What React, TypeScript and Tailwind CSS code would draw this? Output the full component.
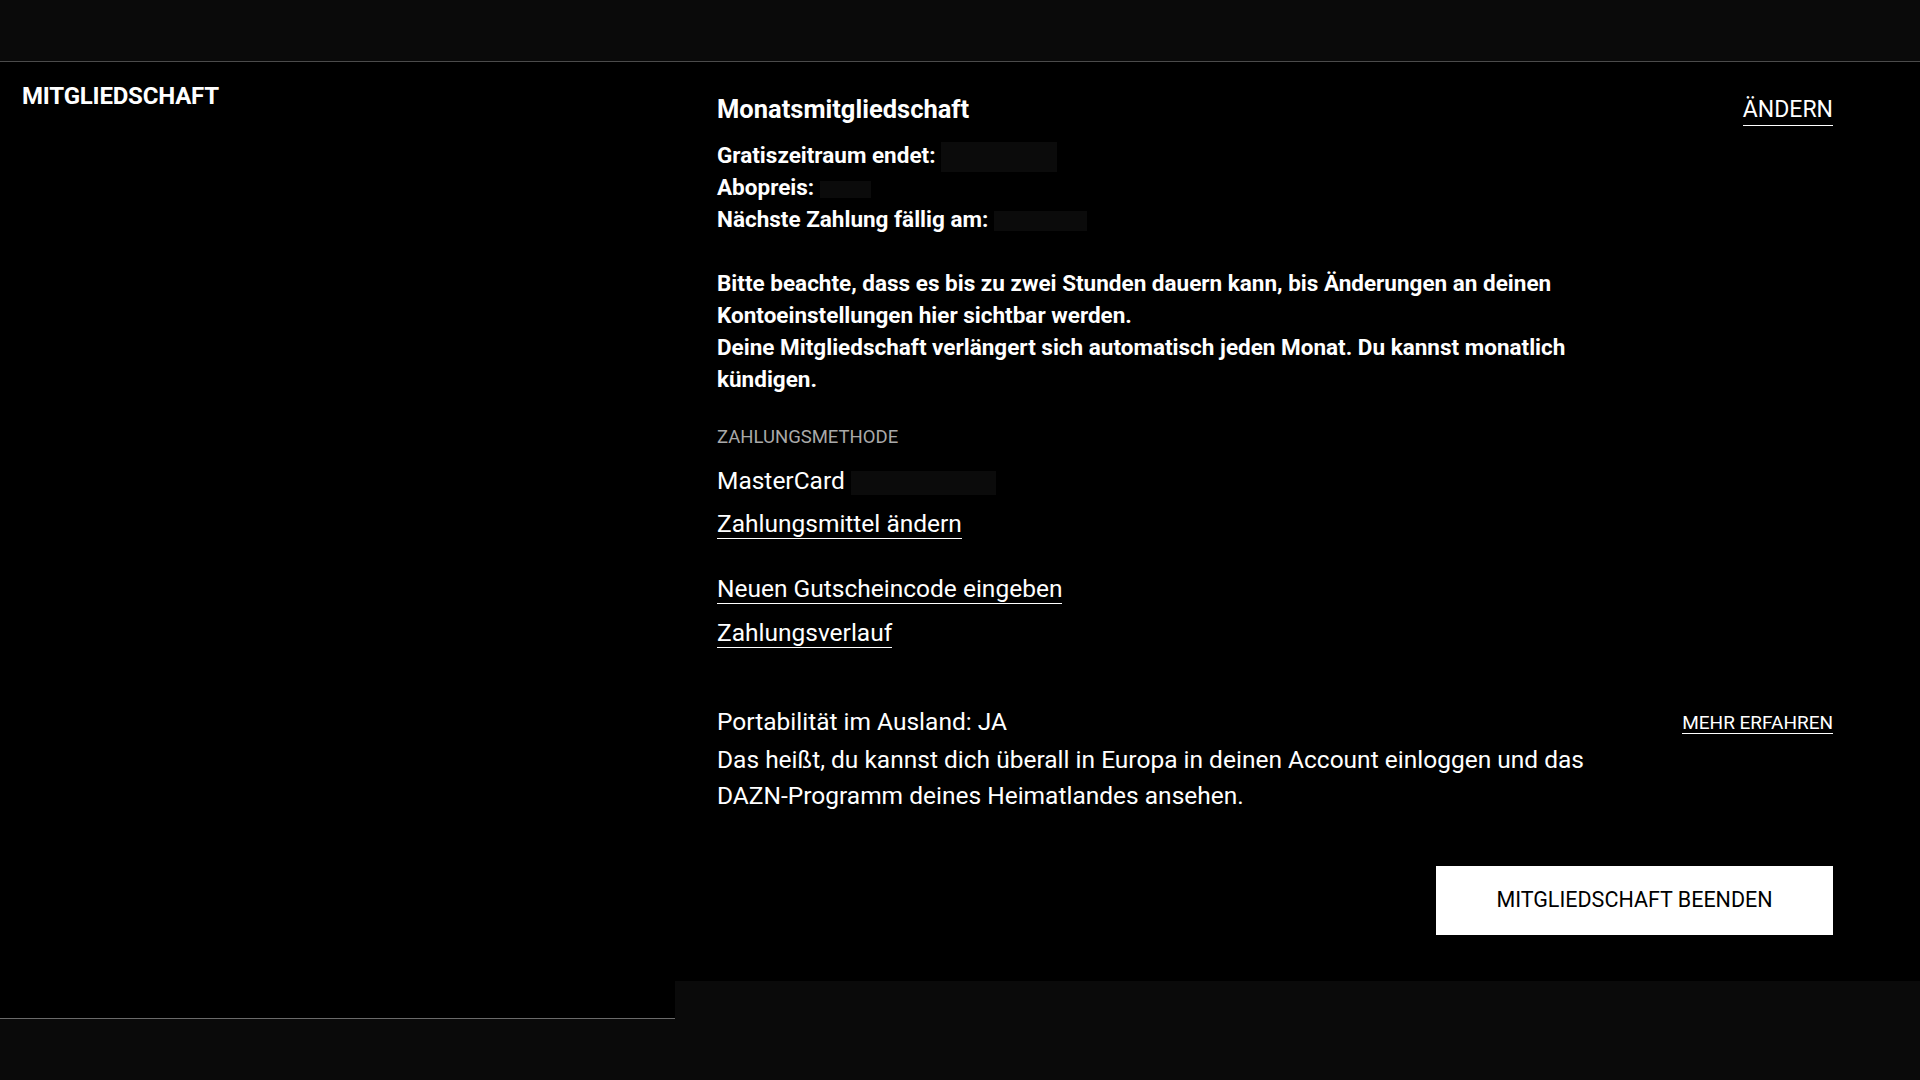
import React from 'react'

// ── Small pieces ─────────────────────────────────────────────────

// Masked values from the screenshot: very faint blocks that must not grow the line box
function Redacted({ className }: { className: string }) {
  return <span className={`inline-block align-middle bg-[#0b0b0b] ${className}`} />
}

function TextLink({ children, className = '' }: { children: React.ReactNode; className?: string }) {
  return (
    <a href="#" className={`inline-block border-b border-white text-white ${className}`}>
      {children}
    </a>
  )
}

// ── Component ────────────────────────────────────────────────────

export default function App() {
  return (
    <div className="min-h-screen bg-[#0a0a0a] text-white font-['Roboto','Liberation_Sans',sans-serif]">
      {/* Header */}
      <div className="h-[62px] border-b border-[#4b4b4b]" />

      <div className="flex items-start">
        {/* Left nav */}
        <div className="w-[675px] h-[957px] shrink-0 bg-black border-b border-[#6a6a6a] px-[22px] pt-[18px]">
          <h1 className="text-[24px] leading-[32px] font-bold tracking-[-0.2px]">MITGLIEDSCHAFT</h1>
        </div>

        {/* Membership details */}
        <div className="flex-1 h-[919px] bg-black pl-[42px] pr-[87px] pt-[31px]">
          <div className="flex items-start justify-between">
            <h2 className="text-[25.5px] leading-[32px] font-bold">Monatsmitgliedschaft</h2>
            <TextLink className="text-[23px] leading-[30px] mt-[2px]">ÄNDERN</TextLink>
          </div>

          <div className="mt-[13px] text-[22.5px] leading-[32px] font-bold">
            <div className="h-[32px]">
              Gratiszeitraum endet: <Redacted className="w-[116px] h-[30px] -my-[6px]" />
            </div>
            <div className="h-[32px]">
              Abopreis: <Redacted className="w-[51px] h-[17px] -my-[2px]" />
            </div>
            <div className="h-[32px]">
              Nächste Zahlung fällig am: <Redacted className="w-[93px] h-[20px] -my-[2px]" />
            </div>

            <p className="mt-8 max-w-[880px]">
              Bitte beachte, dass es bis zu zwei Stunden dauern kann, bis Änderungen an deinen Kontoeinstellungen hier sichtbar werden.
              <br />
              Deine Mitgliedschaft verlängert sich automatisch jeden Monat. Du kannst monatlich kündigen.
            </p>
          </div>

          {/* Payment */}
          <div className="mt-[30px] text-[18.5px] leading-[24px] text-[#a9a9a9] uppercase">Zahlungsmethode</div>
          <div className="mt-4 h-[32px] text-[24.5px] leading-[32px]">
            MasterCard <Redacted className="w-[145px] h-[24px] -my-[2px]" />
          </div>
          <div className="mt-[13px]">
            <TextLink className="text-[24.5px] leading-[28px]">Zahlungsmittel ändern</TextLink>
          </div>

          <div className="mt-[36px] flex flex-col items-start gap-[15px]">
            <TextLink className="text-[24.5px] leading-[28px]">Neuen Gutscheincode eingeben</TextLink>
            <TextLink className="text-[24.5px] leading-[28px]">Zahlungsverlauf</TextLink>
          </div>

          {/* Portability */}
          <div className="mt-[56px] flex items-start justify-between">
            <div className="max-w-[890px] text-[24.5px] leading-[36px]">
              <div>Portabilität im Ausland: JA</div>
              <p className="mt-[2px]">
                Das heißt, du kannst dich überall in Europa in deinen Account einloggen und das DAZN-Programm deines Heimatlandes ansehen.
              </p>
            </div>
            <TextLink className="mt-[8px] text-[19px] leading-[21px]">MEHR ERFAHREN</TextLink>
          </div>

          <div className="mt-[52px] flex justify-end">
            <button className="w-[397px] h-[69px] bg-white text-black text-[21.5px] uppercase">
              Mitgliedschaft beenden
            </button>
          </div>
        </div>
      </div>
    </div>
  )
}
